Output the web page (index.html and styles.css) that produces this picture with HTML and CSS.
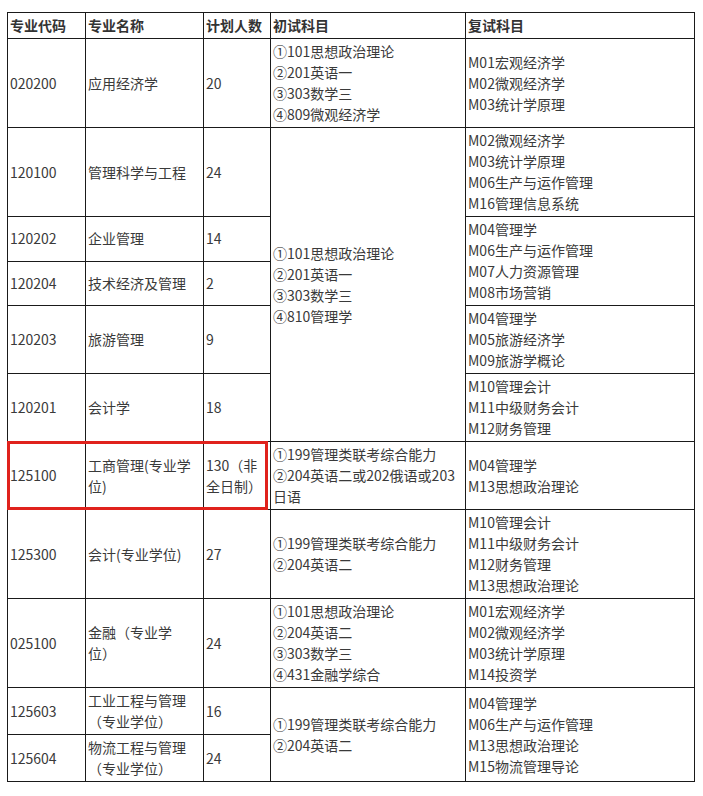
FILE: index.html
```html
<!DOCTYPE html>
<html lang="zh-CN">
<head>
<meta charset="utf-8">
<title>专业目录</title>
<link rel="stylesheet" href="styles.css">
</head>
<body>
<table class="plan">
  <colgroup>
    <col class="c-code"><col class="c-name"><col class="c-num"><col class="c-first"><col class="c-second">
  </colgroup>
  <thead>
    <tr><th>专业代码</th><th>专业名称</th><th>计划人数</th><th>初试科目</th><th>复试科目</th></tr>
  </thead>
  <tbody>
    <tr>
      <td>020200</td><td>应用经济学</td><td>20</td>
      <td>①101思想政治理论<br>②201英语一<br>③303数学三<br>④809微观经济学</td>
      <td>M01宏观经济学<br>M02微观经济学<br>M03统计学原理</td>
    </tr>
    <tr>
      <td>120100</td><td>管理科学与工程</td><td>24</td>
      <td rowspan="5">①101思想政治理论<br>②201英语一<br>③303数学三<br>④810管理学</td>
      <td>M02微观经济学<br>M03统计学原理<br>M06生产与运作管理<br>M16管理信息系统</td>
    </tr>
    <tr>
      <td>120202</td><td>企业管理</td><td>14</td>
      <td rowspan="2">M04管理学<br>M06生产与运作管理<br>M07人力资源管理<br>M08市场营销</td>
    </tr>
    <tr>
      <td>120204</td><td>技术经济及管理</td><td>2</td>
    </tr>
    <tr>
      <td>120203</td><td>旅游管理</td><td>9</td>
      <td>M04管理学<br>M05旅游经济学<br>M09旅游学概论</td>
    </tr>
    <tr>
      <td>120201</td><td>会计学</td><td>18</td>
      <td>M10管理会计<br>M11中级财务会计<br>M12财务管理</td>
    </tr>
    <tr>
      <td class="marked">125100<span class="highlight"></span></td><td>工商管理(专业学<br>位)</td><td>130（非<br>全日制）</td>
      <td>①199管理类联考综合能力<br>②204英语二或202俄语或203<br>日语</td>
      <td>M04管理学<br>M13思想政治理论</td>
    </tr>
    <tr>
      <td>125300</td><td>会计(专业学位)</td><td>27</td>
      <td>①199管理类联考综合能力<br>②204英语二</td>
      <td>M10管理会计<br>M11中级财务会计<br>M12财务管理<br>M13思想政治理论</td>
    </tr>
    <tr>
      <td>025100</td><td>金融（专业学<br>位）</td><td>24</td>
      <td>①101思想政治理论<br>②204英语二<br>③303数学三<br>④431金融学综合</td>
      <td>M01宏观经济学<br>M02微观经济学<br>M03统计学原理<br>M14投资学</td>
    </tr>
    <tr>
      <td>125603</td><td>工业工程与管理<br>（专业学位）</td><td>16</td>
      <td rowspan="2">①199管理类联考综合能力<br>②204英语二</td>
      <td rowspan="2">M04管理学<br>M06生产与运作管理<br>M13思想政治理论<br>M15物流管理导论</td>
    </tr>
    <tr>
      <td>125604</td><td>物流工程与管理<br>（专业学位）</td><td>24</td>
    </tr>
  </tbody>
</table>
</body>
</html>
```

FILE: styles.css
```css
html, body {
  margin: 0;
  padding: 0;
  background: #ffffff;
}

body {
  padding: 12px 0 0 7px;
  font-family: "Microsoft YaHei", "Noto Sans CJK SC", "Noto Sans", sans-serif;
  font-size: 14px;
  line-height: 21px;
  color: #3a3a3a;
}

.plan {
  border-collapse: collapse;
  table-layout: fixed;
  width: 687px;
}

.c-code { width: 78px; }
.c-name { width: 118px; }
.c-num { width: 67px; }
.c-first { width: 195px; }
.c-second { width: 229px; }

.plan th,
.plan td {
  border: 1px solid #1a1a1a;
  padding: 2px;
  vertical-align: middle;
  text-align: left;
  word-break: break-all;
}

.plan th {
  font-weight: bold;
  color: #333333;
}

.marked {
  position: relative;
}

.highlight {
  position: absolute;
  left: -1px;
  top: -1px;
  bottom: -1px;
  width: 261px;
  border: 3px solid #e0221c;
  box-sizing: border-box;
  pointer-events: none;
}
```
